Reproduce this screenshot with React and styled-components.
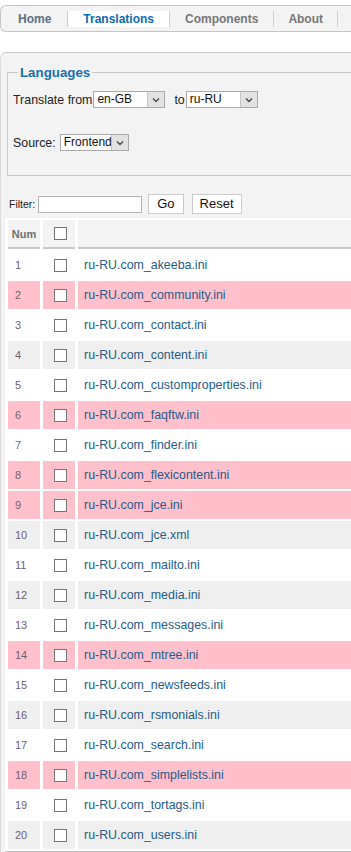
import React from "react";
import styled, { createGlobalStyle } from "styled-components";

const Global = createGlobalStyle`
  html, body { margin: 0; padding: 0; background: #fff; overflow-x: hidden; }
  body { font-family: "Liberation Sans", Arial, sans-serif; }
`;

const Page = styled.div`
  width: 100%;
  overflow: hidden;
  padding-top: 5px;
`;

const NavBar = styled.ul`
  list-style: none;
  margin: 0 -20px 0 0;
  padding: 0 0 0 1px;
  height: 25px;
  border: 1px solid #c4c4c4;
  border-right: none;
  border-radius: 6px 0 0 6px;
  background: #f3f3f3;
  display: flex;
  align-items: center;
`;

const NavItem = styled.li`
  height: 16px;
  display: flex;
  align-items: center;
  padding: 0 ${(p) => p.$pad}px;
  border-right: 1px solid #cfcfcf;
  background: ${(p) => (p.$active ? "#fff" : "transparent")};
  font-weight: bold;
  font-size: 12px;
  color: ${(p) => p.$color};
  white-space: nowrap;
`;

const Panel = styled.div`
  margin-top: 20px;
  border-top: 1px solid #c8c8c8;
  border-left: 1px solid #dadada;
  border-radius: 6px 0 0 0;
  background: #f3f3f3;
  padding: 12px 0 0 6px;
  min-height: 820px;
`;

const Fieldset = styled.fieldset`
  margin: 0 -20px 0 0;
  padding: 4px 6px 24px 5px;
  border: 1px solid #c8c8c8;
  border-right: none;
`;

const Legend = styled.legend`
  padding: 0 2px;
  margin-left: 5px;
  font-weight: bold;
  font-size: 13.3px;
  color: #1c6eaf;
  line-height: 15px;
`;

const FormRow = styled.div`
  display: flex;
  align-items: center;
  font-size: 12.4px;
  color: #222;
  margin-top: ${(p) => p.$mt || 0}px;
`;

const Label = styled.span`
  margin-right: ${(p) => p.$mr || 0}px;
  margin-left: ${(p) => p.$ml || 0}px;
`;

const SelectBox = styled.div`
  display: inline-flex;
  width: ${(p) => p.$w}px;
  height: 17px;
  box-sizing: border-box;
  border: 1px solid #a9a9a9;
  background: #fff;
`;

const SelectValue = styled.span`
  flex: 1;
  min-width: 0;
  font-size: 12px;
  line-height: 15px;
  padding-left: 3px;
  color: #111;
  white-space: nowrap;
  overflow: hidden;
`;

const SelectArrow = styled.span`
  flex: 0 0 16px;
  background: #e2e2e2;
  border-left: 1px solid #c4c4c4;
  display: flex;
  align-items: center;
  justify-content: center;
`;

const FilterRow = styled.div`
  display: flex;
  align-items: center;
  margin: 18px 0 0 2px;
`;

const FilterLabel = styled.span`
  font-size: 10.5px;
  color: #222;
  margin-right: 3px;
`;

const FilterInput = styled.input`
  width: 104px;
  height: 17px;
  box-sizing: border-box;
  border: 1px solid #b4b4b4;
  background: #fff;
  padding: 0 2px;
  margin: 0 6px 0 0;
  font-family: inherit;
`;

const Button = styled.button`
  height: 20px;
  box-sizing: border-box;
  border: 1px solid #c9c9c9;
  background: #fff;
  font-family: inherit;
  font-size: 13px;
  color: #111;
  padding: 0 ${(p) => p.$pad}px;
  margin-right: 8px;
  line-height: 18px;
`;

const Table = styled.table`
  margin: 4px 0 0 -2px;
  width: 430px;
  table-layout: fixed;
  border-collapse: separate;
  border-spacing: 3px 2px;
  background: #fff;
  border-bottom: 2px solid #c3c3c3;
`;

const HeadCell = styled.th`
  height: 27px;
  padding: 0;
  background: #f3f3f3;
  border-bottom: 2px solid #c8c8c8;
  font-size: 11px;
  font-weight: bold;
  color: #707070;
  text-align: center;
  vertical-align: middle;
`;

const Row = styled.tr`
  background: ${(p) => p.$bg};
`;

const NumCell = styled.td`
  height: 28px;
  padding: 0 0 0 7px;
  font-size: 11px;
  color: #6e6070;
  vertical-align: middle;
`;

const CheckCell = styled.td`
  padding: 0;
  text-align: center;
  vertical-align: middle;
`;

const NameCell = styled.td`
  padding: 0 0 0 6px;
  font-size: 12.4px;
  color: #245b8a;
  vertical-align: middle;
  white-space: nowrap;
`;

const Check = styled.span`
  display: inline-block;
  width: 13px;
  height: 13px;
  box-sizing: border-box;
  border: 1px solid #767676;
  background: #fff;
  vertical-align: middle;
  margin-left: 3px;
`;

const Chevron = () => (
  <svg width="8" height="6" viewBox="0 0 8 6">
    <path d="M1 1.5 L4 4.5 L7 1.5" fill="none" stroke="#4a4a4a" strokeWidth="1.4" />
  </svg>
);

const Select = ({ w, value }) => (
  <SelectBox $w={w}>
    <SelectValue>{value}</SelectValue>
    <SelectArrow>
      <Chevron />
    </SelectArrow>
  </SelectBox>
);

const files = [
  "akeeba",
  "community",
  "contact",
  "content",
  "customproperties",
  "faqftw",
  "finder",
  "flexicontent",
  "jce",
  "jce.xml",
  "mailto",
  "media",
  "messages",
  "mtree",
  "newsfeeds",
  "rsmonials",
  "search",
  "simplelists",
  "tortags",
  "users",
];
const pink = new Set([2, 6, 8, 9, 14, 18]);

export default function App() {
  return (
    <Page>
      <Global />
      <NavBar>
        <NavItem $pad={16} $color="#5b6f87">Home</NavItem>
        <NavItem $pad={15} $active $color="#0b6bb3">Translations</NavItem>
        <NavItem $pad={15} $color="#777">Components</NavItem>
        <NavItem $pad={14} $color="#777">About</NavItem>
      </NavBar>
      <Panel>
        <Fieldset>
          <Legend>Languages</Legend>
          <FormRow $mt={7}>
            <Label $mr={1}>Translate from</Label>
            <Select w={72} value="en-GB" />
            <Label $ml={9} $mr={1}>to</Label>
            <Select w={72} value="ru-RU" />
          </FormRow>
          <FormRow $mt={26}>
            <Label $mr={4}>Source:</Label>
            <Select w={69} value="Frontend" />
          </FormRow>
        </Fieldset>
        <FilterRow>
          <FilterLabel>Filter:</FilterLabel>
          <FilterInput />
          <Button $pad={8}>Go</Button>
          <Button $pad={7}>Reset</Button>
        </FilterRow>
        <Table>
          <colgroup>
            <col style={{ width: 32 }} />
            <col style={{ width: 32 }} />
            <col />
          </colgroup>
          <thead>
            <tr>
              <HeadCell>Num</HeadCell>
              <HeadCell>
                <Check />
              </HeadCell>
              <HeadCell />
            </tr>
          </thead>
          <tbody>
            {files.map((f, i) => {
              const n = i + 1;
              const bg = pink.has(n) ? "#ffc0cb" : n % 2 === 0 ? "#efefef" : "#fff";
              const name = f.endsWith(".xml") ? `ru-RU.com_${f}` : `ru-RU.com_${f}.ini`;
              return (
                <Row key={n} $bg={bg}>
                  <NumCell>{n}</NumCell>
                  <CheckCell>
                    <Check />
                  </CheckCell>
                  <NameCell>{name}</NameCell>
                </Row>
              );
            })}
          </tbody>
        </Table>
      </Panel>
    </Page>
  );
}
